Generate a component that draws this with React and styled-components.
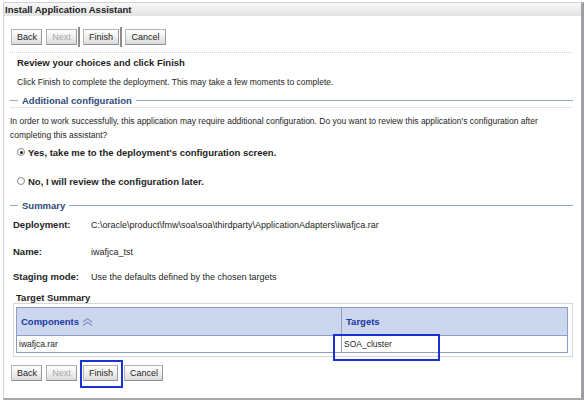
import React from 'react';
import styled, { createGlobalStyle } from 'styled-components';

const GlobalStyle = createGlobalStyle`
  body {
    margin: 0;
    background: #fff;
    font-family: "Liberation Sans", Arial, sans-serif;
    font-size: 9px;
    color: #1e1e1e;
  }
`;

const Window = styled.div`
  box-sizing: border-box;
  margin: 2px 0 0 3px;
  width: 581px;
  height: 398px;
  border: 1px solid #d2d2d2;
  border-right: 3px solid #9ca0a5;
  border-bottom: 2px solid #a8a8a8;
  background: #fff;
`;

const TitleBar = styled.div`
  height: 13px;
  line-height: 13px;
  padding-left: 1px;
  font-weight: bold;
  font-size: 9.5px;
  color: #222;
  background: linear-gradient(#f7f7f7, #ececec 55%, #e2e2e2);
`;

const Body = styled.div`
  padding: 0 8px 0 7px;
`;

const Toolbar = styled.div`
  display: flex;
  align-items: center;
  height: 16px;
  margin-top: ${p => p.$top}px;
`;

const Button = styled.div`
  box-sizing: border-box;
  height: 16px;
  line-height: 14px;
  padding: 0 5px;
  width: ${p => p.$w}px;
  text-align: center;
  border: 1px solid #b4b4b4;
  border-bottom-color: #8f8f8f;
  border-right-color: #9a9a9a;
  background: linear-gradient(#ffffff, #f0f0f0 50%, #d9d9d9);
  color: ${p => (p.$disabled ? '#a7a7a7' : '#1e1e1e')};
  margin-right: ${p => p.$mr || 0}px;
  position: relative;
`;

const Separator = styled.div`
  width: 2px;
  height: 20px;
  margin: 0 3px 0 1px;
  background: ${p => (p.$hidden ? 'transparent' : '#8d8d8d')};
`;

const Highlight = styled.div`
  position: absolute;
  box-sizing: border-box;
  left: ${p => p.$l}px;
  top: ${p => p.$t}px;
  width: ${p => p.$w}px;
  height: ${p => p.$h}px;
  border: 2px solid #1733d6;
  pointer-events: none;
`;

const Dotted = styled.div`
  margin: 7px 0 0 -1px;
  border-top: 1px dotted #cfcfcf;
`;

const Heading = styled.div`
  margin: 4px 0 0 6px;
  height: 12px;
  line-height: 12px;
  font-weight: bold;
  font-size: 9.5px;
`;

const Text = styled.div`
  margin: ${p => p.$top}px 0 0 ${p => p.$left}px;
  line-height: ${p => p.$lh || 12}px;
  font-size: 8.5px;
`;

const SectionHeader = styled.div`
  display: flex;
  align-items: center;
  height: 12px;
  margin: ${p => p.$top}px 0 0 -1px;
  &::before {
    content: '';
    width: 8px;
    height: 1px;
    margin-right: 4px;
    background: #8fa8cc;
  }
  &::after {
    content: '';
    flex: 1;
    height: 1px;
    margin-left: 4px;
    background: #8fa8cc;
  }
`;

const SectionTitle = styled.span`
  font-weight: bold;
  font-size: 9.5px;
  color: #2f4a78;
`;

const FaintLine = styled.div`
  margin: 1px 0 0 -1px;
  border-top: 1px solid #e6e6e6;
`;

const RadioRow = styled.div`
  display: flex;
  align-items: center;
  height: 12px;
  margin: ${p => p.$top}px 0 0 6px;
  font-weight: bold;
  font-size: 9.5px;
`;

const Radio = styled.span`
  box-sizing: border-box;
  width: 8px;
  height: 8px;
  margin-right: 3px;
  border-radius: 50%;
  border: 1px solid #8a8a8a;
  background: #fff;
  display: flex;
  align-items: center;
  justify-content: center;
  &::after {
    content: '';
    width: 3px;
    height: 3px;
    border-radius: 50%;
    background: ${p => (p.$checked ? '#222' : 'transparent')};
  }
`;

const InfoRow = styled.div`
  display: flex;
  height: 12px;
  line-height: 12px;
  margin: ${p => p.$top}px 0 0 2px;
`;

const Label = styled.span`
  width: 78px;
  font-weight: bold;
  font-size: 9.5px;
`;

const SubHeading = styled.div`
  margin: 9px 0 0 5px;
  height: 11px;
  line-height: 11px;
  font-weight: bold;
  font-size: 9.5px;
`;

const TableBox = styled.div`
  margin: 0 0 0 2px;
  padding: 3px 4px 3px 2px;
  border: 1px solid #d6d6d6;
`;

const Table = styled.table`
  width: 100%;
  border-collapse: collapse;
  border: 1px solid #8e9dc2;
  font-size: 8.5px;
`;

const Th = styled.th`
  height: 27px;
  padding: 0 0 0 4px;
  text-align: left;
  font-weight: bold;
  font-size: 9.5px;
  color: #1b38a3;
  background: #ccd6ee;
  border-right: 1px solid #8e9dc2;
  border-bottom: 1px solid #8e9dc2;
  width: ${p => p.$w || 'auto'};
`;

const Td = styled.td`
  position: relative;
  height: 16px;
  padding: 0 0 0 2px;
  border-right: 1px solid #8e9dc2;
`;

const SortIcon = () => (
  <svg width="11" height="8" viewBox="0 0 11 8" style={{ marginLeft: 3, verticalAlign: -1 }}>
    <polyline points="1,4 5.5,0.8 10,4" fill="none" stroke="#8397c4" strokeWidth="1.3" />
    <polyline points="1,7.5 5.5,4.3 10,7.5" fill="none" stroke="#8397c4" strokeWidth="1.3" />
  </svg>
);

const Buttons = ({ top, separators, highlight }) => (
  <Toolbar $top={top}>
    <Button $w={31} $mr={4}>Back</Button>
    <Button $w={31} $disabled>Next</Button>
    <Separator $hidden={!separators} />
    <Button $w={separators ? 36 : 35}>
      Finish
      {highlight && <Highlight $l={-4} $t={-6} $w={43} $h={28} />}
    </Button>
    <Separator $hidden={!separators} />
    <Button $w={separators ? 41 : 39}>Cancel</Button>
  </Toolbar>
);

export default function App() {
  return (
    <>
      <GlobalStyle />
      <Window>
        <TitleBar>Install Application Assistant</TitleBar>
        <Body>
          <Buttons top={13} separators />
          <Dotted />
          <Heading>Review your choices and click Finish</Heading>
          <Text $top={7} $left={6}>
            Click Finish to complete the deployment. This may take a few moments to complete.
          </Text>
          <SectionHeader $top={6}>
            <SectionTitle>Additional configuration</SectionTitle>
          </SectionHeader>
          <FaintLine />
          <Text $top={6} $left={-1} $lh={14}>
            In order to work successfully, this application may require additional configuration. Do you want to review this application's configuration after
            <br />
            completing this assistant?
          </Text>
          <RadioRow $top={4}>
            <Radio $checked />
            Yes, take me to the deployment's configuration screen.
          </RadioRow>
          <RadioRow $top={17}>
            <Radio />
            No, I will review the configuration later.
          </RadioRow>
          <SectionHeader $top={12}>
            <SectionTitle>Summary</SectionTitle>
          </SectionHeader>
          <InfoRow $top={8}>
            <Label>Deployment:</Label>
            <span>C:\oracle\product\fmw\soa\soa\thirdparty\ApplicationAdapters\iwafjca.rar</span>
          </InfoRow>
          <InfoRow $top={15}>
            <Label>Name:</Label>
            <span>iwafjca_tst</span>
          </InfoRow>
          <InfoRow $top={13}>
            <Label>Staging mode:</Label>
            <span>Use the defaults defined by the chosen targets</span>
          </InfoRow>
          <SubHeading>Target Summary</SubHeading>
          <TableBox>
            <Table>
              <thead>
                <tr>
                  <Th $w="320px">
                    Components
                    <SortIcon />
                  </Th>
                  <Th>Targets</Th>
                </tr>
              </thead>
              <tbody>
                <tr>
                  <Td>iwafjca.rar</Td>
                  <Td>
                    SOA_cluster
                    <Highlight $l={-9} $t={-2} $w={107} $h={27} />
                  </Td>
                </tr>
              </tbody>
            </Table>
          </TableBox>
          <Buttons top={8} highlight />
        </Body>
      </Window>
    </>
  );
}
